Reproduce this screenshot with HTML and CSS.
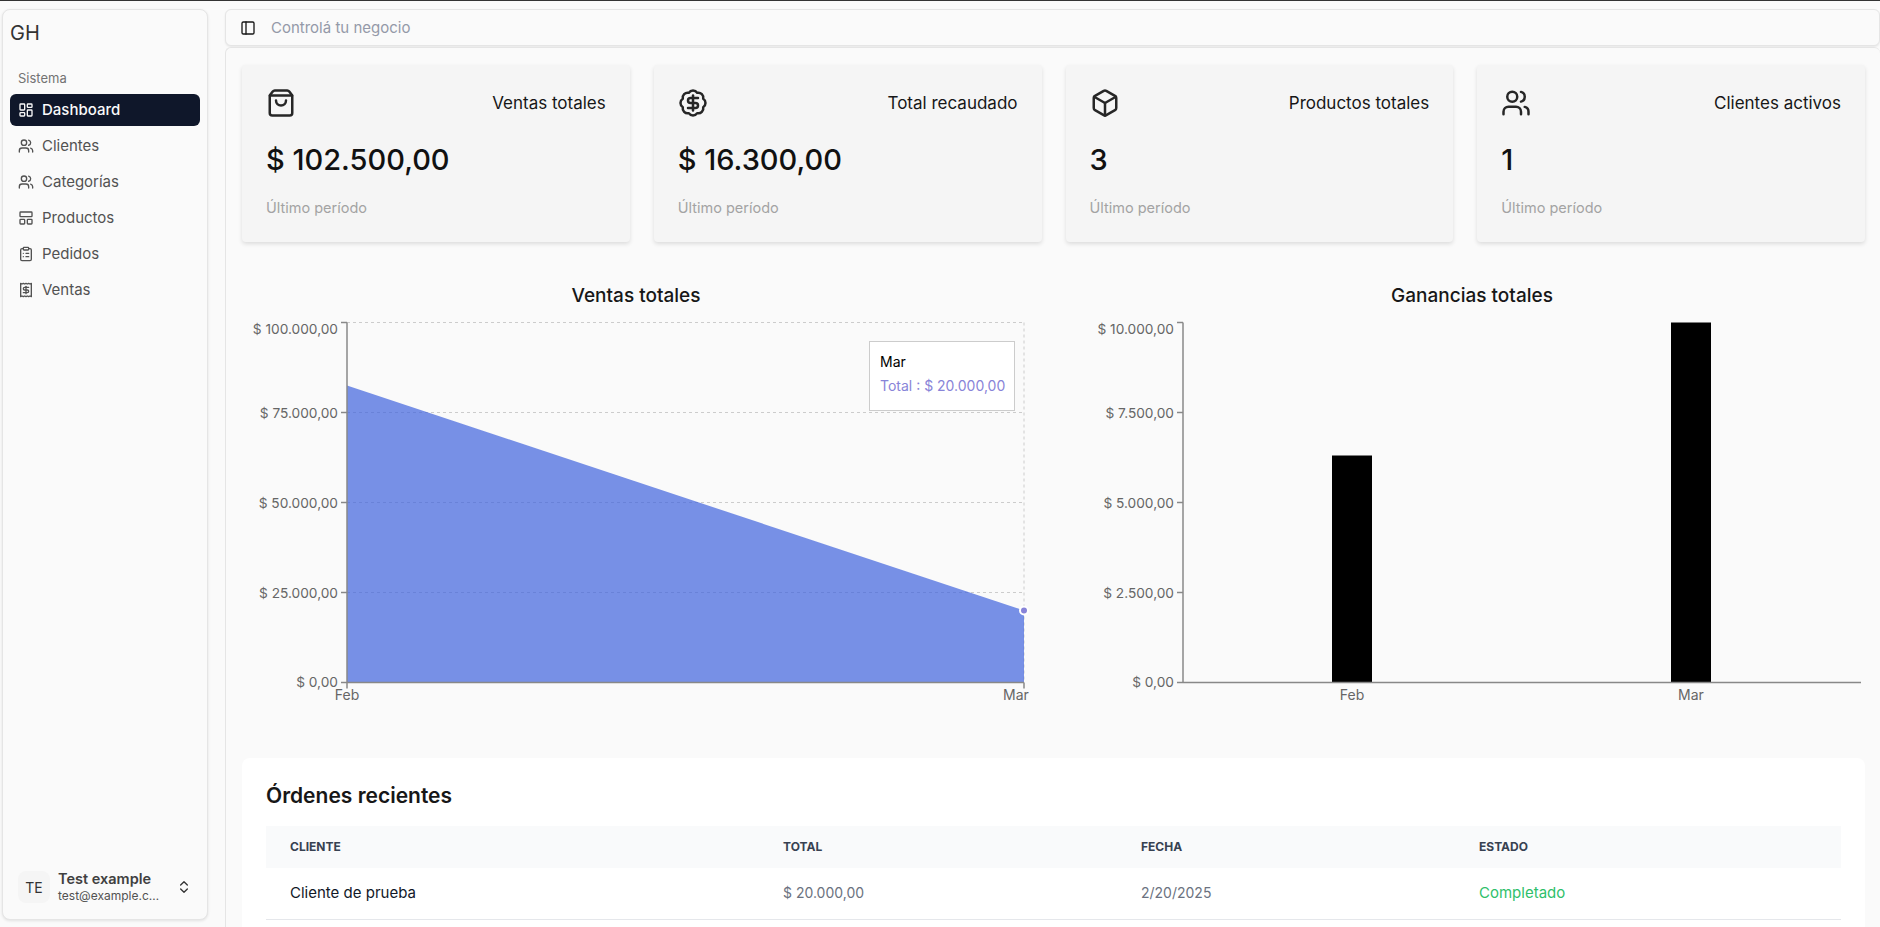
FILE: index.html
```html
<!DOCTYPE html>
<html lang="es">
<head>
    <meta charset="UTF-8">
    <meta name="viewport" content="width=device-width, initial-scale=1.0">
    <title>Dashboard</title>
    <link rel="stylesheet" href="styles.css">
</head>
<body>
    <div class="app">
        <aside class="sidebar">
            <div class="brand">GH</div>
            <div class="nav-label">Sistema</div>
            <nav class="nav">
                <a class="nav-item active">
                    <svg class="icon" viewBox="0 0 24 24"><rect x="3" y="3" width="7" height="9" rx="1"/><rect x="14" y="3" width="7" height="5" rx="1"/><rect x="14" y="12" width="7" height="9" rx="1"/><rect x="3" y="16" width="7" height="5" rx="1"/></svg>
                    Dashboard
                </a>
                <a class="nav-item">
                    <svg class="icon" viewBox="0 0 24 24"><path d="M16 21v-2a4 4 0 0 0-4-4H6a4 4 0 0 0-4 4v2"/><circle cx="9" cy="7" r="4"/><path d="M22 21v-2a4 4 0 0 0-3-3.87"/><path d="M16 3.13a4 4 0 0 1 0 7.75"/></svg>
                    Clientes
                </a>
                <a class="nav-item">
                    <svg class="icon" viewBox="0 0 24 24"><path d="M16 21v-2a4 4 0 0 0-4-4H6a4 4 0 0 0-4 4v2"/><circle cx="9" cy="7" r="4"/><path d="M22 21v-2a4 4 0 0 0-3-3.87"/><path d="M16 3.13a4 4 0 0 1 0 7.75"/></svg>
                    Categorías
                </a>
                <a class="nav-item">
                    <svg class="icon" viewBox="0 0 24 24"><rect x="3" y="3" width="18" height="7" rx="1"/><rect x="3" y="14" width="7" height="7" rx="1"/><rect x="14" y="14" width="7" height="7" rx="1"/></svg>
                    Productos
                </a>
                <a class="nav-item">
                    <svg class="icon" viewBox="0 0 24 24"><rect x="8" y="2" width="8" height="4" rx="1"/><path d="M16 4h2a2 2 0 0 1 2 2v14a2 2 0 0 1-2 2H6a2 2 0 0 1-2-2V6a2 2 0 0 1 2-2h2"/><path d="M12 11h4"/><path d="M12 16h4"/><path d="M8 11h.01"/><path d="M8 16h.01"/></svg>
                    Pedidos
                </a>
                <a class="nav-item">
                    <svg class="icon" viewBox="0 0 24 24"><path d="M4 2v20l2-1 2 1 2-1 2 1 2-1 2 1 2-1 2 1V2l-2 1-2-1-2 1-2-1-2 1-2-1-2 1Z"/><path d="M16 8h-6a2 2 0 1 0 0 4h4a2 2 0 1 1 0 4H8"/><path d="M12 17.5v-11"/></svg>
                    Ventas
                </a>
            </nav>
            <div class="user">
                <div class="avatar">TE</div>
                <div class="user-info">
                    <div class="user-name">Test example</div>
                    <div class="user-mail">test@example.c…</div>
                </div>
                <svg class="icon" viewBox="0 0 24 24"><path d="m7 15 5 5 5-5"/><path d="m7 9 5-5 5 5"/></svg>
            </div>
        </aside>

        <div class="content">
            <header class="topbar">
                <svg class="icon" viewBox="0 0 24 24"><rect x="3" y="3" width="18" height="18" rx="2"/><path d="M9 3v18"/></svg>
                <span>Controlá tu negocio</span>
            </header>

            <main class="main">
                <section class="stats">
                    <div class="stat-card">
                        <div class="stat-top">
                            <svg class="stat-icon" viewBox="0 0 24 24"><path d="M16 10a4 4 0 0 1-8 0"/><path d="M3.103 6.034h17.794"/><path d="M3.4 5.467a2 2 0 0 0-.4 1.2V20a2 2 0 0 0 2 2h14a2 2 0 0 0 2-2V6.667a2 2 0 0 0-.4-1.2l-2-2.667A2 2 0 0 0 17 2H7a2 2 0 0 0-1.6.8z"/></svg>
                            <span>Ventas totales</span>
                        </div>
                        <div class="stat-value">$ 102.500,00</div>
                        <div class="stat-note">Último período</div>
                    </div>
                    <div class="stat-card">
                        <div class="stat-top">
                            <svg class="stat-icon" viewBox="0 0 24 24"><path d="M3.85 8.62a4 4 0 0 1 4.78-4.77 4 4 0 0 1 6.74 0 4 4 0 0 1 4.78 4.78 4 4 0 0 1 0 6.74 4 4 0 0 1-4.77 4.78 4 4 0 0 1-6.75 0 4 4 0 0 1-4.78-4.77 4 4 0 0 1 0-6.76Z"/><path d="M16 8h-6a2 2 0 1 0 0 4h4a2 2 0 1 1 0 4H8"/><path d="M12 18V6"/></svg>
                            <span>Total recaudado</span>
                        </div>
                        <div class="stat-value">$ 16.300,00</div>
                        <div class="stat-note">Último período</div>
                    </div>
                    <div class="stat-card">
                        <div class="stat-top">
                            <svg class="stat-icon" viewBox="0 0 24 24"><path d="M21 8a2 2 0 0 0-1-1.73l-7-4a2 2 0 0 0-2 0l-7 4A2 2 0 0 0 3 8v8a2 2 0 0 0 1 1.73l7 4a2 2 0 0 0 2 0l7-4A2 2 0 0 0 21 16Z"/><path d="m3.3 7 8.7 5 8.7-5"/><path d="M12 22V12"/></svg>
                            <span>Productos totales</span>
                        </div>
                        <div class="stat-value">3</div>
                        <div class="stat-note">Último período</div>
                    </div>
                    <div class="stat-card">
                        <div class="stat-top">
                            <svg class="stat-icon" viewBox="0 0 24 24"><path d="M16 21v-2a4 4 0 0 0-4-4H6a4 4 0 0 0-4 4v2"/><circle cx="9" cy="7" r="4"/><path d="M22 21v-2a4 4 0 0 0-3-3.87"/><path d="M16 3.13a4 4 0 0 1 0 7.75"/></svg>
                            <span>Clientes activos</span>
                        </div>
                        <div class="stat-value">1</div>
                        <div class="stat-note">Último período</div>
                    </div>
                </section>

                <section class="charts">
                    <div class="chart">
                        <h3 class="chart-title">Ventas totales</h3>
                        <div class="chart-box">
                            <svg class="chart-svg" viewBox="0 0 788 400" width="788" height="400">
                                <g class="grid">
                                    <line x1="105" y1="5.5" x2="782" y2="5.5"/>
                                    <line x1="105" y1="95.5" x2="782" y2="95.5"/>
                                    <line x1="105" y1="185.5" x2="782" y2="185.5"/>
                                    <line x1="105" y1="275.5" x2="782" y2="275.5"/>
                                    <line x1="782" y1="5.5" x2="782" y2="365.5"/>
                                </g>
                                <path class="area" d="M105 68.5 L782 293.5 V365.5 H105 Z"/>
                                <g class="axis">
                                    <line x1="105" y1="5.5" x2="105" y2="365.5"/>
                                    <line x1="105" y1="365.5" x2="782" y2="365.5"/>
                                    <line x1="99" y1="5.5" x2="105" y2="5.5"/>
                                    <line x1="99" y1="95.5" x2="105" y2="95.5"/>
                                    <line x1="99" y1="185.5" x2="105" y2="185.5"/>
                                    <line x1="99" y1="275.5" x2="105" y2="275.5"/>
                                    <line x1="99" y1="365.5" x2="105" y2="365.5"/>
                                    <line x1="105" y1="365.5" x2="105" y2="371.5"/>
                                    <line x1="782" y1="365.5" x2="782" y2="371.5"/>
                                </g>
                                <g class="tick-y">
                                    <text x="96" y="17">$ 100.000,00</text>
                                    <text x="96" y="101">$ 75.000,00</text>
                                    <text x="96" y="191">$ 50.000,00</text>
                                    <text x="96" y="281">$ 25.000,00</text>
                                    <text x="96" y="370">$ 0,00</text>
                                </g>
                                <g class="tick-x">
                                    <text x="105" y="383">Feb</text>
                                    <text x="774" y="383">Mar</text>
                                </g>
                                <circle class="dot" cx="782" cy="293.5" r="4"/>
                            </svg>
                            <div class="tooltip">
                                <div class="tooltip-label">Mar</div>
                                <div class="tooltip-value">Total : $ 20.000,00</div>
                            </div>
                        </div>
                    </div>
                    <div class="chart">
                        <h3 class="chart-title">Ganancias totales</h3>
                        <div class="chart-box">
                            <svg class="chart-svg" viewBox="0 0 788 400" width="788" height="400">
                                <rect class="bar" x="254" y="138.5" width="40" height="227"/>
                                <rect class="bar" x="593" y="5.5" width="40" height="360"/>
                                <g class="axis">
                                    <line x1="105" y1="5.5" x2="105" y2="365.5"/>
                                    <line x1="105" y1="365.5" x2="783" y2="365.5"/>
                                    <line x1="99" y1="5.5" x2="105" y2="5.5"/>
                                    <line x1="99" y1="95.5" x2="105" y2="95.5"/>
                                    <line x1="99" y1="185.5" x2="105" y2="185.5"/>
                                    <line x1="99" y1="275.5" x2="105" y2="275.5"/>
                                    <line x1="99" y1="365.5" x2="105" y2="365.5"/>
                                </g>
                                <g class="tick-y">
                                    <text x="96" y="17">$ 10.000,00</text>
                                    <text x="96" y="101">$ 7.500,00</text>
                                    <text x="96" y="191">$ 5.000,00</text>
                                    <text x="96" y="281">$ 2.500,00</text>
                                    <text x="96" y="370">$ 0,00</text>
                                </g>
                                <g class="tick-x">
                                    <text x="274" y="383">Feb</text>
                                    <text x="613" y="383">Mar</text>
                                </g>
                            </svg>
                        </div>
                    </div>
                </section>

                <section class="orders">
                    <h2 class="orders-title">Órdenes recientes</h2>
                    <table class="orders-table">
                        <thead>
                            <tr>
                                <th class="col-client">Cliente</th>
                                <th class="col-total">Total</th>
                                <th class="col-date">Fecha</th>
                                <th>Estado</th>
                            </tr>
                        </thead>
                        <tbody>
                            <tr>
                                <td class="client-name">Cliente de prueba</td>
                                <td>$ 20.000,00</td>
                                <td>2/20/2025</td>
                                <td class="status-done">Completado</td>
                            </tr>
                        </tbody>
                    </table>
                </section>
            </main>
        </div>
    </div>
</body>
</html>
```

FILE: styles.css
```css
* {
    box-sizing: border-box;
}

html, body {
    height: 100%;
    margin: 0;
    overflow: hidden;
}

body {
    font-family: "Inter", "Liberation Sans", sans-serif;
    background-color: #fafafa;
    color: #171717;
    border-top: 1px solid #333;
}

.app {
    display: flex;
    height: 926px;
    padding-top: 8px;
}

.icon {
    width: 16px;
    height: 16px;
    flex-shrink: 0;
    fill: none;
    stroke: currentColor;
    stroke-width: 2;
    stroke-linecap: round;
    stroke-linejoin: round;
}

/* sidebar */
.sidebar {
    width: 206px;
    height: 911px;
    margin-left: 2px;
    padding: 0 7px 8px;
    display: flex;
    flex-direction: column;
    background-color: #fafafa;
    border: 1px solid #e5e5e5;
    border-radius: 8px;
    box-shadow: 0 1px 3px rgba(0, 0, 0, 0.1);
}

.brand {
    font-size: 20px;
    line-height: 24px;
    color: #333;
    margin-top: 11px;
}

.nav-label {
    font-size: 13px;
    line-height: 16px;
    color: #737373;
    padding-left: 8px;
    margin-top: 25px;
}

.nav {
    display: flex;
    flex-direction: column;
    gap: 4px;
    margin-top: 8px;
}

.nav-item {
    display: flex;
    align-items: center;
    gap: 8px;
    height: 32px;
    padding: 0 0 1px 8px;
    border-radius: 6px;
    font-size: 15px;
    color: #525252;
}

.nav-item.active {
    background-color: #0f172a;
    color: #fafafa;
    font-weight: 500;
}

.user {
    display: flex;
    align-items: center;
    margin-top: auto;
    padding: 0 8px;
    height: 48px;
    color: #333;
}

.avatar {
    width: 32px;
    height: 32px;
    display: flex;
    align-items: center;
    justify-content: center;
    border-radius: 8px;
    background-color: #f5f5f5;
    font-size: 14px;
    flex-shrink: 0;
}

.user-info {
    flex: 1;
    min-width: 0;
    margin-left: 8px;
}

.user-name {
    font-size: 14.5px;
    font-weight: 600;
    line-height: 18px;
    color: #404040;
}

.user-mail {
    font-size: 12px;
    line-height: 16px;
    color: #525252;
    white-space: nowrap;
}

/* top bar and content */
.content {
    flex: 1;
    min-width: 0;
    margin-left: 17px;
}

.topbar {
    display: flex;
    align-items: center;
    gap: 15px;
    height: 37px;
    margin-bottom: 1px;
    padding-left: 14px;
    background-color: #fafafa;
    border: 1px solid #e5e5e5;
    border-radius: 6px;
    box-shadow: 0 1px 2px rgba(0, 0, 0, 0.08);
    font-size: 15px;
    color: #9499a8;
}

.topbar .icon {
    color: #171717;
}

.main {
    height: 880px;
    padding: 17px 15px 0 16px;
    border-top: 1px solid #e5e5e5;
    border-left: 1px solid #e5e5e5;
    border-radius: 6px 6px 0 0;
    background-color: #fafafa;
}

.stats {
    display: grid;
    grid-template-columns: repeat(4, 1fr);
    gap: 24px;
}

.stat-card {
    height: 177px;
    padding: 23px 24px;
    background-color: #f5f5f5;
    border-radius: 4px;
    box-shadow: 0 2px 4px rgba(0, 0, 0, 0.12);
}

.stat-top {
    display: flex;
    justify-content: space-between;
    align-items: center;
    height: 30px;
    font-size: 17px;
    color: #171717;
}

.stat-icon {
    width: 30px;
    height: 30px;
    fill: none;
    stroke: #262626;
    stroke-width: 2;
    stroke-linecap: round;
    stroke-linejoin: round;
}

.stat-value {
    margin-top: 24px;
    font-size: 29px;
    line-height: 36px;
    font-weight: 500;
    color: #111;
}

.stat-note {
    margin-top: 21px;
    font-size: 14.5px;
    line-height: 18px;
    color: #a3a3a3;
}

/* charts */
.charts {
    display: grid;
    grid-template-columns: 1fr 1fr;
    gap: 48px;
    margin-top: 39px;
}

.chart-title {
    margin: 0;
    text-align: center;
    font-size: 19px;
    font-weight: 500;
    line-height: 30px;
}

.chart-box {
    position: relative;
    height: 400px;
    margin-top: 6px;
}

.chart-svg {
    display: block;
    overflow: visible;
}

.grid line {
    stroke: #ccc;
    stroke-dasharray: 3 3;
}

.area {
    fill: #3f63dd;
    fill-opacity: 0.7;
}

.bar {
    fill: #000;
}

.axis line {
    stroke: #888;
    stroke-width: 1.5;
}

.tick-y text {
    font-size: 13.7px;
    fill: #666;
    text-anchor: end;
}

.tick-x text {
    font-size: 14px;
    fill: #666;
    text-anchor: middle;
}

.dot {
    fill: #8884d8;
    stroke: #fff;
    stroke-width: 2;
}

.tooltip {
    position: absolute;
    left: 627px;
    top: 24px;
    width: 146px;
    height: 70px;
    padding: 8px 10px;
    background-color: #fff;
    border: 1px solid #ccc;
    font-size: 14px;
    line-height: 24px;
}

.tooltip-label {
    color: #000;
}

.tooltip-value {
    color: #8884d8;
    white-space: nowrap;
}

/* recent orders */
.orders {
    margin-top: 41px;
    padding: 24px;
    background-color: #fff;
    border-radius: 8px;
}

.orders-title {
    margin: 0;
    font-size: 21px;
    font-weight: 600;
    line-height: 28px;
    color: #171717;
}

.orders-table {
    width: 100%;
    margin-top: 16px;
    border-collapse: collapse;
}

.orders-table th {
    height: 42px;
    padding: 0 24px 2px;
    text-align: left;
    font-size: 12px;
    font-weight: 700;
    text-transform: uppercase;
    color: #374151;
    background-color: #f9fafb;
}

.orders-table td {
    height: 51px;
    padding: 0 24px 2px;
    font-size: 14px;
    color: #6b7280;
    border-bottom: 1px solid #e5e7eb;
}

.col-client {
    width: 493px;
}

.col-total {
    width: 358px;
}

.col-date {
    width: 338px;
}

.orders-table .client-name {
    color: #111827;
    font-size: 15px;
}

.orders-table .status-done {
    color: #2fbf6b;
    font-size: 15px;
}
```
